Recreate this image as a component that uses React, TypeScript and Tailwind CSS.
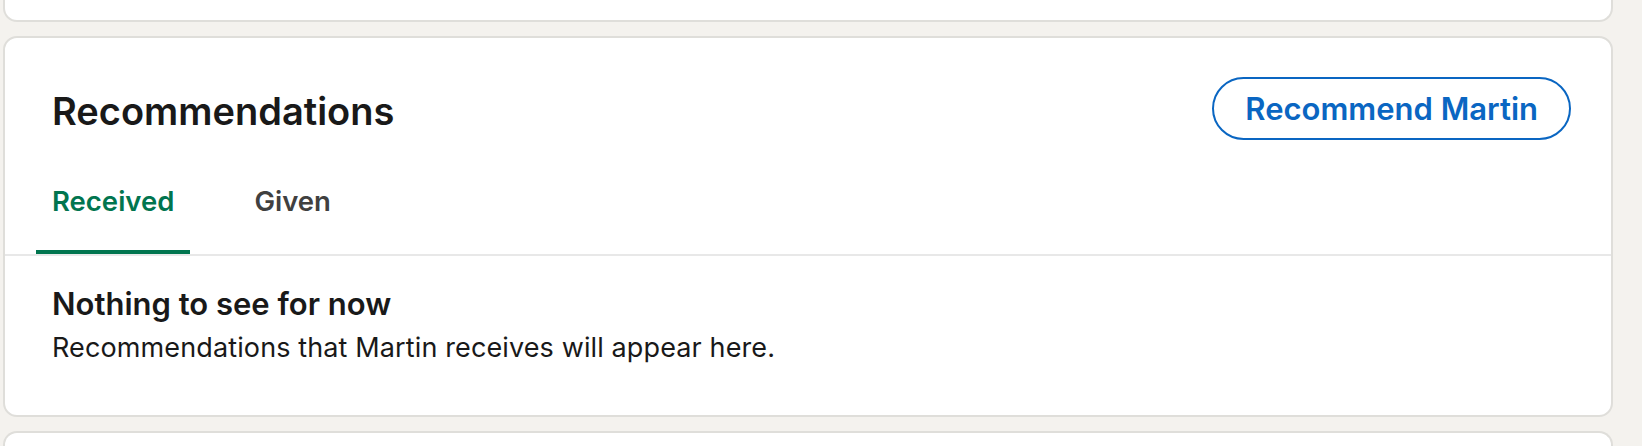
import React, { useState } from 'react'

type Tab = 'received' | 'given'

const tabs: { id: Tab; label: string }[] = [
  { id: 'received', label: 'Received' },
  { id: 'given', label: 'Given' },
]

export default function App() {
  const [active, setActive] = useState<Tab>('received')

  return (
    <div
      className="h-[446px] overflow-hidden bg-[#f4f2ee] pl-[3px] pr-[29px]"
      style={{ fontFamily: 'Inter, "Noto Sans", sans-serif' }}
    >
      {/* card above, only its bottom edge shows */}
      <div className="h-[22px] rounded-b-[14px] border-2 border-t-0 border-[#dfdeda] bg-white" />

      <section className="mt-[14px] rounded-[14px] border-2 border-[#dfdeda] bg-white">
        <div className="flex items-start justify-between pl-[47px] pr-[40px] pt-[39px]">
          <h2 className="mt-[11px] text-[38px] font-semibold leading-[46px] text-[#191919]">
            Recommendations
          </h2>
          <button
            type="button"
            className="h-[63px] rounded-full border-2 border-[#0a66c2] px-[31px] text-[31px] font-semibold leading-[40px] text-[#0a66c2]"
          >
            Recommend Martin
          </button>
        </div>

        <div className="flex gap-[48px] border-b-2 border-[#e8e8e8] pl-[31px]">
          {tabs.map((tab) => (
            <button
              key={tab.id}
              type="button"
              onClick={() => setActive(tab.id)}
              className={`border-b-4 px-[16px] pb-[31px] pt-[44px] text-[27.5px] font-semibold leading-[35px] ${
                active === tab.id ? 'border-[#01754f] text-[#01754f]' : 'border-transparent text-[#404040]'
              }`}
            >
              {tab.label}
            </button>
          ))}
        </div>

        <div className="pb-[51px] pl-[47px] pt-[30px]">
          <h3 className="text-[31px] font-semibold leading-[36px] text-[#191919]">Nothing to see for now</h3>
          <p className="mt-[10px] text-[27px] leading-[32px] tracking-[0.12px] text-[#191919]">
            Recommendations that Martin receives will appear here.
          </p>
        </div>
      </section>

      <div className="mt-[14px] h-[40px] rounded-t-[14px] border-2 border-b-0 border-[#dfdeda] bg-white" />
    </div>
  )
}
